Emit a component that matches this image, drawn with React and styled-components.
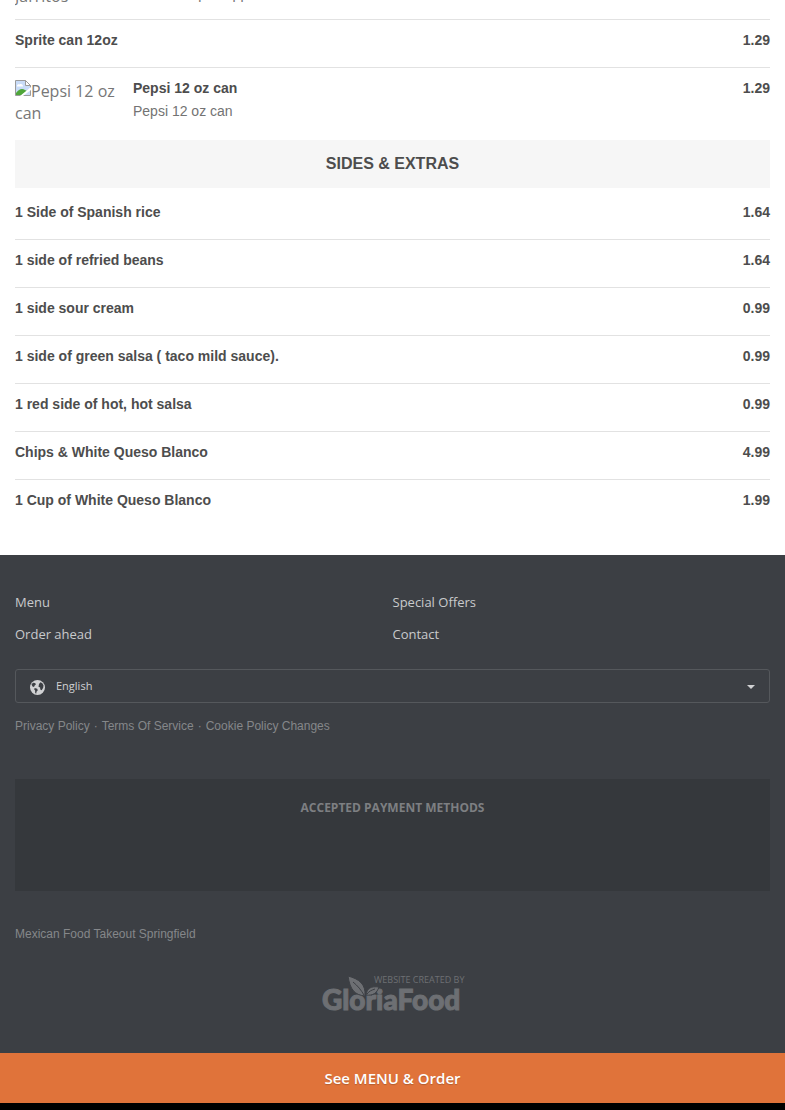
import styled, { createGlobalStyle } from "styled-components";

const GlobalStyle = createGlobalStyle`
* {
  box-sizing: border-box;
}
body {
  margin: 0;
  background-color: #000;
  color: #4d4d4d;
  font-family: "Liberation Sans", Arial, sans-serif;
  font-size: 14px;
}
`;

const Menu = styled.main`
background-color: #fff;
padding: 0px 15px 28px;
`;
const ScrolledItem = styled.div`
height: 19px;
display: flex;
align-items: flex-end;
overflow: hidden;
`;
const Item = styled.article`
display: flex;
width: 100%;
min-height: ${props => props.$first ? "47px" : "48px"};
padding: 12px 0px;
border-top: ${props => props.$first ? "none" : "1px solid #e2e2e2"};
`;
const Thumb = styled.div`
width: 103px;
height: 44px;
margin-right: 15px;
flex: none;
overflow: hidden;
color: #777;
font-family: "Open Sans", sans-serif;
font-size: 16px;
line-height: 22px;
`;
const BrokenImage = styled.svg`
width: 16px;
height: 16px;
vertical-align: top;
`;
const Info = styled.div`
flex: 1;
`;
const Name = styled.h3`
margin: 0px;
font-size: 14px;
font-weight: 700;
line-height: 16px;
`;
const Desc = styled.p`
margin: 7px 0px 0px;
color: #737373;
line-height: 16px;
`;
const Price = styled.span`
font-weight: 700;
line-height: 16px;
`;
const Category = styled.h2`
margin: 4px 0px;
background-color: #f6f6f6;
font-size: 16px;
font-weight: 700;
line-height: 48px;
text-align: center;
`;

const FooterContainer = styled.footer`
background-color: #3c3f44;
padding: 31px 15px 41px;
color: #85878a;
font-size: 12px;
`;
const FooterNav = styled.nav`
display: grid;
grid-template-columns: 1fr 1fr;
margin-bottom: 19px;
`;
const NavLink = styled.a`
color: #c9cacc;
font-family: "Open Sans", sans-serif;
font-size: 13px;
line-height: 32px;
text-decoration: none;
`;
const Language = styled.label`
display: flex;
position: relative;
color: #d0d1d3;
`;
const GlobeIcon = styled.svg`
position: absolute;
left: 15px;
top: 11px;
width: 15px;
height: 15px;
pointer-events: none;
`;
const Caret = styled.span`
position: absolute;
right: 15px;
top: 16px;
border: 4px solid transparent;
border-top-color: #d0d1d3;
border-bottom: none;
pointer-events: none;
`;
const LanguageSelect = styled.select`
appearance: none;
width: 100%;
height: 34px;
padding: 0px 40px 2px;
border: 1px solid #55585c;
border-radius: 3px;
background-color: transparent;
color: #d0d1d3;
font-family: "Open Sans", sans-serif;
font-size: 11px;
`;
const Legal = styled.div`
display: flex;
gap: 4px;
margin-top: 15px;
line-height: 16px;
`;
const LegalLink = styled.a`
color: #85878a;
text-decoration: none;
`;
const Payments = styled.section`
height: 112px;
margin: 45px 0px 35px;
padding-top: 21px;
background-color: #35383c;
text-align: center;
`;
const PaymentsTitle = styled.h4`
margin: 0px;
color: #7d7f82;
font-family: "Open Sans", sans-serif;
font-size: 12px;
font-weight: 700;
line-height: 16px;
`;
const Address = styled.p`
margin: 0px;
line-height: 16px;
`;
const LogoLink = styled.a`
display: block;
width: 144px;
margin: 33px auto 0px;
`;
const Logo = styled.svg`
display: block;
width: 144px;
height: 37px;
fill: #6d6f73;
`;
const OrderButton = styled.button`
display: block;
width: 100%;
height: 50px;
margin-bottom: 7px;
border: none;
background-color: #e0733a;
color: #fff;
font-family: "Open Sans", sans-serif;
font-size: 15px;
font-weight: 600;
text-shadow: 0px 1px 1px rgba(0, 0, 0, 0.2);
cursor: pointer;
`;

const sides = [
  { name: "1 Side of Spanish rice", price: "1.64" },
  { name: "1 side of refried beans", price: "1.64" },
  { name: "1 side sour cream", price: "0.99" },
  { name: "1 side of green salsa ( taco mild sauce).", price: "0.99" },
  { name: "1 red side of hot, hot salsa", price: "0.99" },
  { name: "Chips & White Queso Blanco", price: "4.99" },
  { name: "1 Cup of White Queso Blanco", price: "1.99" },
];

function MissingImage({ alt }) {
  return <Thumb>
    <BrokenImage viewBox="0 0 16 16" aria-hidden="true">
      <path d="M.5.5h10l5 5v10H.5z" fill="#c9dcf8" stroke="#9b9b9b"/>
      <path d="M10.5.5v5h5z" fill="#fff" stroke="#9b9b9b"/>
      <path d="M2 6c0-2 2-2 2.500-1.500 2-1 3.500 0 3.500 2H2z" fill="#fff"/>
      <path d="M1 15v-2c3-4 6-5 9-3l2 1-5 4z" fill="#4fa63a"/>
      <path d="M16 7v3l-8 6H5z" fill="#fff"/>
    </BrokenImage>{alt}
  </Thumb>;
}

function MenuItem({ name, price, desc, image, first }) {
  return <Item $first={first}>
    {image && <MissingImage alt={image}/>}
    <Info>
      <Name>{name}</Name>
      {desc && <Desc>{desc}</Desc>}
    </Info>
    <Price>{price}</Price>
  </Item>;
}

function Footer() {
  return <FooterContainer>
    <FooterNav>
      <NavLink href="#menu">Menu</NavLink>
      <NavLink href="#offers">Special Offers</NavLink>
      <NavLink href="#order">Order ahead</NavLink>
      <NavLink href="#contact">Contact</NavLink>
    </FooterNav>
    <Language>
      <GlobeIcon viewBox="0 0 15 15" aria-hidden="true">
        <circle cx="7.5" cy="7.5" r="7.5" fill="#d0d1d3"/>
        <path d="M1.500 4.500 3 2.800l2 .2 1 1.200-1.300 1.300-.7 1.500-1.500-.5zM4.800 8l2.400.8.6 1.400-1.300 1.500-.3 2-1-.8-.1-2.400-1-1.200zM9 4l1.500-1.800 1.800 1 1.200 2-.3 2.600-1.500 2.400-1.400-.7-.2-2-1.600-.8z" fill="#3c3f44"/>
      </GlobeIcon>
      <LanguageSelect aria-label="Language">
        <option>English</option>
      </LanguageSelect>
      <Caret/>
    </Language>
    <Legal>
      <LegalLink href="#privacy">Privacy Policy</LegalLink>
      <span>·</span>
      <LegalLink href="#terms">Terms Of Service</LegalLink>
      <span>·</span>
      <LegalLink href="#cookies">Cookie Policy Changes</LegalLink>
    </Legal>
    <Payments>
      <PaymentsTitle>ACCEPTED PAYMENT METHODS</PaymentsTitle>
    </Payments>
    <Address>Mexican Food Takeout Springfield</Address>
    <LogoLink href="#gloriafood">
      <Logo viewBox="0 0 144 37">
        <text x="53" y="8" fontFamily="Open Sans, sans-serif" fontSize="9">WEBSITE CREATED BY</text>
        <text x="1" y="35" fontFamily="Lato, sans-serif" fontSize="28" fontWeight="900" stroke="#6d6f73">GloriaFood</text>
        <path d="M27 1c11 3 18 8 17 20-10-1-15-6-17-20zM45 20c1-7 5-9 13-8-2 6-6 9-13 8z" stroke="#3c3f44"/>
        <path d="M32 7c5 4 8 8 11 13M46 19c2-3 5-4 8-5" fill="none" stroke="#3c3f44"/>
      </Logo>
    </LogoLink>
  </FooterContainer>;
}

function App() {
  return <>
    <GlobalStyle/>
    <Menu>
      <ScrolledItem>
        <MenuItem image="Mexican Jarritos" name="Jarritos" desc="Jarritos of pineapple" price="2.49"/>
      </ScrolledItem>
      <MenuItem name="Sprite can 12oz" price="1.29"/>
      <MenuItem image="Pepsi 12 oz can" name="Pepsi 12 oz can" desc="Pepsi 12 oz can" price="1.29"/>
      <Category>SIDES &amp; EXTRAS</Category>
      {sides.map((side, i) => <MenuItem key={side.name} first={i === 0} {...side}/>)}
    </Menu>
    <Footer/>
    <OrderButton>See MENU &amp; Order</OrderButton>
  </>;
}

export default App;
